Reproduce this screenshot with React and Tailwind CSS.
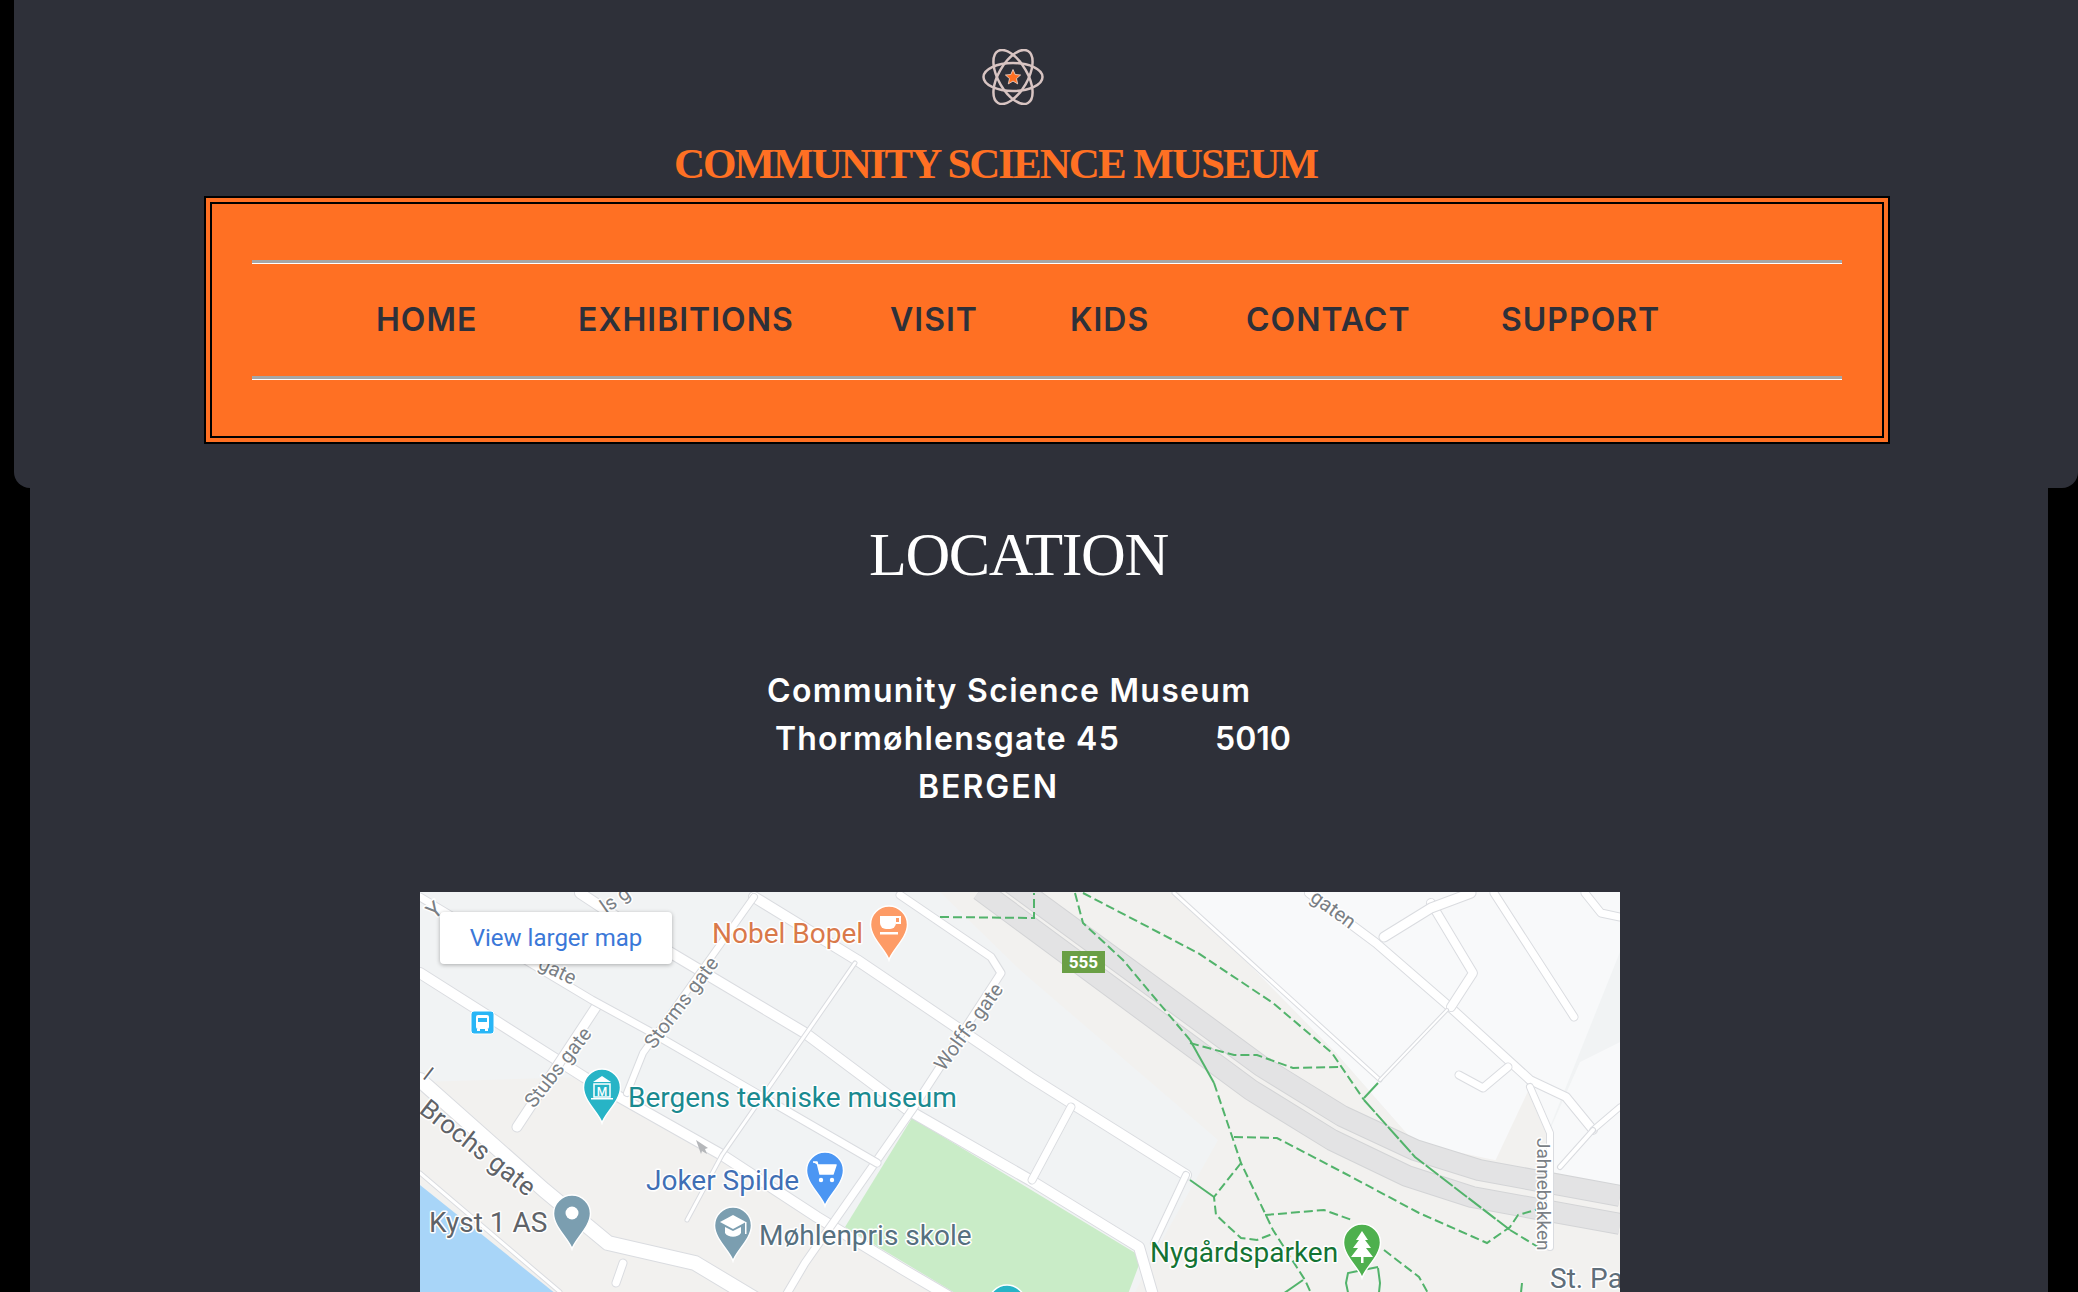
import React from 'react';

const navItems = [
  { label: 'HOME', width: 'w-[202px]' },
  { label: 'EXHIBITIONS', width: 'w-[312px]' },
  { label: 'VISIT', width: 'w-[180px]' },
  { label: 'KIDS', width: 'w-[176px]' },
  { label: 'CONTACT', width: 'w-[255px]' },
  { label: 'SUPPORT', width: 'w-[170px]' },
];

const toPath = (pts) => pts.map((p, i) => `${i ? 'L' : 'M'}${p[0]} ${p[1]}`).join(' ');

const Logo = () => (
  <svg width="62" height="56" viewBox="0 0 62 56" fill="none" className="block">
    <g stroke="#d8c4c2" strokeWidth="2.5">
      <ellipse cx="31" cy="28" rx="29.5" ry="14" />
      <ellipse cx="31" cy="28" rx="30" ry="14.5" transform="rotate(60 31 28)" />
      <ellipse cx="31" cy="28" rx="30" ry="14.5" transform="rotate(-60 31 28)" />
    </g>
    <path
      d="M31 20.5l2.2 5 5.4.5-4.1 3.6 1.2 5.3-4.7-2.8-4.7 2.8 1.2-5.3-4.1-3.6 5.4-.5z"
      fill="#ff7023"
      stroke="#f6dcd2"
      strokeWidth="0.8"
    />
  </svg>
);

const Rule = () => <div className="h-1 border-t-[3px] border-b border-t-[#a6a6a6] border-b-white" />;

const Road = ({ pts, w = 7 }) => (
  <g fill="none" strokeLinecap="round" strokeLinejoin="round">
    <path d={toPath(pts)} stroke="#dadce0" strokeWidth={w + 2} />
    <path d={toPath(pts)} stroke="#ffffff" strokeWidth={w} />
  </g>
);

const Trail = ({ pts, solid, long }) => (
  <path
    d={toPath(pts)}
    fill="none"
    stroke="#52b36b"
    strokeWidth="2"
    strokeDasharray={solid ? undefined : long ? '16 2' : '9 4'}
  />
);

const Pin = ({ x, top, color, children }) => (
  <g transform={`translate(${x} ${top})`}>
    <path
      d="M0 54C-3 44-18.5 32-18.5 18.5A18.5 18.5 0 0 1 18.5 18.5C18.5 32 3 44 0 54Z"
      fill={color}
      stroke="#fff"
      strokeWidth="1.5"
    />
    {children}
  </g>
);

const Label = ({ x, y, color, size = 28, children, rotate, weight }) => (
  <text
    x={x}
    y={y}
    fill={color}
    fontSize={size}
    fontWeight={weight}
    fontFamily="Roboto, sans-serif"
    stroke="#fff"
    strokeWidth="3"
    strokeLinejoin="round"
    paintOrder="stroke"
    transform={rotate ? `rotate(${rotate} ${x} ${y})` : undefined}
  >
    {children}
  </text>
);

const upperLane = 'M575 -21 L841 174 L922 224 L995 258 L1059 278 L1200 304';
const lowerLane = 'M560 -2 L831 198 L912 248 L987 284 L1052 305 L1200 332';

const MapDrawing = () => (
  <svg width="1200" height="410" viewBox="0 0 1200 410" className="block">
    <rect width="1200" height="410" fill="#f1f3f4" />
    <polygon points="0,190 164,185 484,378 520,410 0,410" fill="#f2f1ef" />
    <polygon points="750,0 1200,0 1200,300 995,251 916,161" fill="#f8f9fa" />
    <polygon points="1120,260 1200,60 1200,150 1160,170" fill="#f1f3f4" />
    <polygon points="520,0 758,0 916,161 995,251 1200,295 1200,410 710,410 740,352 798,248 600,78" fill="#f2f1ef" />
    <polygon points="1110,195 1130,241 1130,300 1070,280" fill="#f2f1ef" />
    <polygon points="0,293 146,410 0,410" fill="#a8d5f8" />
    <polygon points="492,226 722,365 705,410 550,410 425,335" fill="#c9ecc7" />

    {/* highway */}
    <g fill="none" strokeLinejoin="round">
      <path d={upperLane} stroke="#d3d4d6" strokeWidth="22" />
      <path d={upperLane} stroke="#e3e3e4" strokeWidth="20" />
      <path d={lowerLane} stroke="#d3d4d6" strokeWidth="22" />
      <path d={lowerLane} stroke="#e3e3e4" strokeWidth="20" />
    </g>

    <Road pts={[[0, 81], [164, 185], [302, 263], [397, 325], [484, 378], [530, 405]]} w={10} />
    <Road pts={[[160, 1], [251, 61], [385, 141], [488, 218], [610, 288], [719, 355], [735, 410]]} w={10} />
    <Road pts={[[334, 5], [437, 68], [610, 185], [766, 283]]} w={10} />
    <Road pts={[[480, 3], [571, 65], [581, 81], [492, 218], [385, 371], [362, 410]]} w={7} />
    <Road pts={[[334, 5], [223, 161], [207, 201]]} w={6} />
    <Road pts={[[435, 71], [302, 263], [267, 328]]} w={3} />
    <Road pts={[[176, 115], [97, 235]]} w={9} />
    <Road pts={[[0, 5], [172, 108], [227, 138], [457, 271]]} w={7} />
    <Road pts={[[651, 215], [612, 288]]} w={7} />
    <Road pts={[[766, 283], [734, 351]]} w={6} />
    <Road pts={[[0, 188], [124, 298], [188, 351], [275, 371], [340, 410]]} w={14} />
    <Road pts={[[203, 371], [196, 391]]} w={7} />
    <Road pts={[[0, 281], [140, 400]]} w={3} />
    <Road pts={[[754, 1], [960, 188]]} w={3} />
    <Road pts={[[889, 1], [956, 51], [1031, 116], [1110, 188], [1146, 205], [1173, 238]]} w={8} />
    <Road pts={[[1011, 11], [1053, 81], [1031, 115]]} w={8} />
    <Road pts={[[964, 45], [1011, 16], [1051, 1]]} w={9} />
    <Road pts={[[1074, 1], [1154, 125]]} w={7} />
    <Road pts={[[1027, 118], [960, 188]]} w={2} />
    <Road pts={[[1039, 183], [1063, 196], [1088, 175]]} w={7} />
    <Road pts={[[1110, 195], [1130, 241], [1130, 355]]} w={6} />
    <Road pts={[[1173, 238], [1200, 215]]} w={5} />
    <Road pts={[[1173, 238], [1140, 275]]} w={4} />
    <Road pts={[[1165, 1], [1181, 21], [1200, 25]]} w={7} />

    <Trail pts={[[520, 25], [614, 26], [614, 1]]} />
    <Trail pts={[[655, 1], [663, 31], [703, 68], [770, 148]]} />
    <Trail pts={[[770, 148], [794, 191]]} solid />
    <Trail pts={[[794, 191], [821, 271], [853, 338], [885, 388], [895, 410]]} />
    <Trail pts={[[663, 1], [778, 61], [853, 111], [912, 161], [944, 208]]} />
    <Trail pts={[[944, 208], [995, 265], [1090, 338]]} long />
    <Trail pts={[[1090, 338], [1118, 355]]} />
    <Trail pts={[[770, 151], [814, 163], [837, 163], [873, 176], [920, 175]]} />
    <Trail pts={[[814, 245], [857, 246], [924, 281], [999, 321], [1067, 351], [1090, 335], [1098, 323], [1122, 316]]} />
    <Trail pts={[[821, 271], [794, 305], [796, 323], [821, 346], [837, 348], [855, 341]]} />
    <Trail pts={[[845, 323], [904, 318], [932, 328]]} />
    <Trail pts={[[964, 358], [999, 385], [1013, 410]]} />
    <Trail pts={[[770, 288], [794, 305]]} solid />
    <Trail pts={[[958, 191], [944, 206]]} solid />
    <Trail pts={[[958, 375], [928, 381], [926, 391], [930, 410]]} solid />
    <Trail pts={[[958, 376], [960, 391], [958, 410]]} solid />
    <Trail pts={[[1102, 391], [1100, 410]]} solid />
    <Trail pts={[[860, 404], [883, 388]]} solid />

    {/* road names */}
    <Label x={234} y={158} color="#7a7f85" size={20} rotate={-53}>Storms gate</Label>
    <Label x={114} y={217} color="#7a7f85" size={20} rotate={-52}>Stubs gate</Label>
    <Label x={524} y={180} color="#7a7f85" size={20} rotate={-54}>Wolffs gate</Label>
    <Label x={117} y={76} color="#7a7f85" size={20} rotate={26}>gate</Label>
    <Label x={186} y={22} color="#7a7f85" size={20} rotate={-35}>ls g</Label>
    <Label x={14} y={28} color="#7a7f85" size={22} rotate={-40}>Y</Label>
    <Label x={889} y={8} color="#7a7f85" size={20} rotate={36}>gaten</Label>
    <Label x={1117} y={246} color="#7a7f85" size={19} rotate={90}>Jahnebakken</Label>
    <Label x={-2} y={220} color="#5f6368" size={26} rotate={38}>Brochs gate</Label>
    <Label x={2} y={186} color="#5f6368" size={20} rotate={38}>l</Label>

    <path d="M276 248l12 8-3 1 2 5-5-3-1 3z" fill="#b5b7ba" />

    {/* bus stop */}
    <rect x="51" y="119" width="23" height="23" rx="3" fill="#29b6f6" stroke="#fff" />
    <rect x="56" y="123" width="13" height="14" rx="2" fill="#fff" />
    <rect x="58" y="126" width="9" height="4" fill="#29b6f6" />
    <rect x="57" y="137" width="3" height="2" fill="#fff" />
    <rect x="65" y="137" width="3" height="2" fill="#fff" />

    {/* route shield */}
    <rect x="642" y="59" width="43" height="22" fill="#6a9f45" />
    <text x="663.5" y="76" textAnchor="middle" fontSize="17" fontWeight="700" fill="#fff" fontFamily="Roboto, sans-serif">555</text>

    <Pin x={469} top={14} color="#fd9b66">
      <path d="M-9 10H7V17A6 6 0 0 1 1 23H-3A6 6 0 0 1 -9 17Z" fill="#fff" />
      <path d="M7 11H11V17H7" fill="none" stroke="#fff" strokeWidth="2" />
      <rect x="-9" y="26" width="18" height="2.5" fill="#fff" />
    </Pin>
    <Pin x={182} top={177} color="#27b4c6">
      <path d="M-9 13L0 7L9 13Z" fill="#fff" />
      <rect x="-8" y="15" width="16" height="13" fill="none" stroke="#fff" strokeWidth="1.5" />
      <rect x="-11" y="29" width="22" height="1.5" fill="#fff" />
      <text x="0" y="27" textAnchor="middle" fontSize="12" fontWeight="500" fill="#fff" fontFamily="Roboto, sans-serif">M</text>
    </Pin>
    <Pin x={405} top={260} color="#4b96f3">
      <path d="M-12 10H-8L-5 22H8L11 13H-7" fill="#fff" stroke="#fff" strokeWidth="1.5" strokeLinejoin="round" />
      <circle cx="-4" cy="28" r="2.2" fill="#fff" />
      <circle cx="7" cy="28" r="2.2" fill="#fff" />
    </Pin>
    <Pin x={152} top={303} color="#7b9eb0">
      <circle cx="0" cy="18" r="6.5" fill="#fff" />
    </Pin>
    <Pin x={313} top={315} color="#7b9eb0">
      <path d="M-13 15L0 8L13 15L0 22Z" fill="#fff" />
      <path d="M-8 20V26C-5 31 5 31 8 26V20L0 24Z" fill="#fff" />
      <rect x="12" y="15" width="1.5" height="12" fill="#fff" />
    </Pin>
    <Pin x={942} top={332} color="#4eb04e">
      <path d="M0 7L6 16H3L9 24H4L11 33H-11L-4 24H-9L-3 16H-6Z" fill="#fff" />
      <rect x="-1" y="33" width="2.5" height="6" fill="#fff" />
    </Pin>
    <Pin x={587} top={393} color="#27b4c6" />

    <Label x={292} y={51} color="#d9794a">Nobel Bopel</Label>
    <Label x={208} y={215} color="#1a8a90">Bergens tekniske museum</Label>
    <Label x={226} y={298} color="#3f6fb5">Joker Spilde</Label>
    <Label x={9} y={340} color="#5f6368">Kyst 1 AS</Label>
    <Label x={339} y={353} color="#56707f">Møhlenpris skole</Label>
    <Label x={730} y={370} color="#137333">Nygårdsparken</Label>
    <Label x={1130} y={396} color="#5f6e7a">St. Pa</Label>
  </svg>
);

export default function App() {
  return (
    <div className="h-screen overflow-hidden bg-black font-['Inter',sans-serif]">
      <header className="ml-[14px] h-[488px] bg-[#2e3039] rounded-b-2xl pt-[49px]">
        <div className="ml-[968px]">
          <Logo />
        </div>
        <h1 className="ml-[660px] mt-[32px] h-[59px] text-[43px] tracking-[-2px] leading-[53px] font-bold text-[#ff7023] font-['Liberation_Serif',serif]">
          COMMUNITY SCIENCE MUSEUM
        </h1>
        <div className="ml-[190px] w-[1686px] border-2 border-black bg-[#ff7023] p-1">
          <nav className="border-2 border-black px-10 py-14">
            <Rule />
            <ul className="h-28 flex items-center pl-[124px] text-[32px] tracking-[1px] font-semibold text-[#2e3039]">
              {navItems.map((item) => (
                <li key={item.label} className={item.width}>{item.label}</li>
              ))}
            </ul>
            <Rule />
          </nav>
        </div>
      </header>
      <main className="mx-[30px] h-[804px] bg-[#2e3039] text-white">
        <h2 className="ml-[839px] pt-[30px] text-[62px] tracking-[-1.4px] leading-[72px] font-normal font-['Liberation_Serif',serif]">
          LOCATION
        </h2>
        <div className="pt-[77px] text-[32px] tracking-[1.3px] leading-[48px] font-semibold">
          <p className="ml-[737px]">Community Science Museum</p>
          <p className="ml-[745px] flex">
            <span className="w-[440px] tracking-[1.2px]">Thormøhlensgate 45</span>
            <span className="tracking-normal">5010</span>
          </p>
          <p className="ml-[888px] tracking-[2px]">BERGEN</p>
        </div>
        <div className="relative ml-[390px] mt-[81px] w-[1200px] h-[410px] overflow-hidden">
          <MapDrawing />
          <a className="absolute left-5 top-5 w-[232px] h-[52px] flex items-center justify-center bg-white rounded-sm shadow-[0_1px_4px_rgba(0,0,0,0.3)] text-[24px] tracking-normal text-[#3b78d8] font-['Roboto',sans-serif]">
            View larger map
          </a>
        </div>
      </main>
    </div>
  );
}
